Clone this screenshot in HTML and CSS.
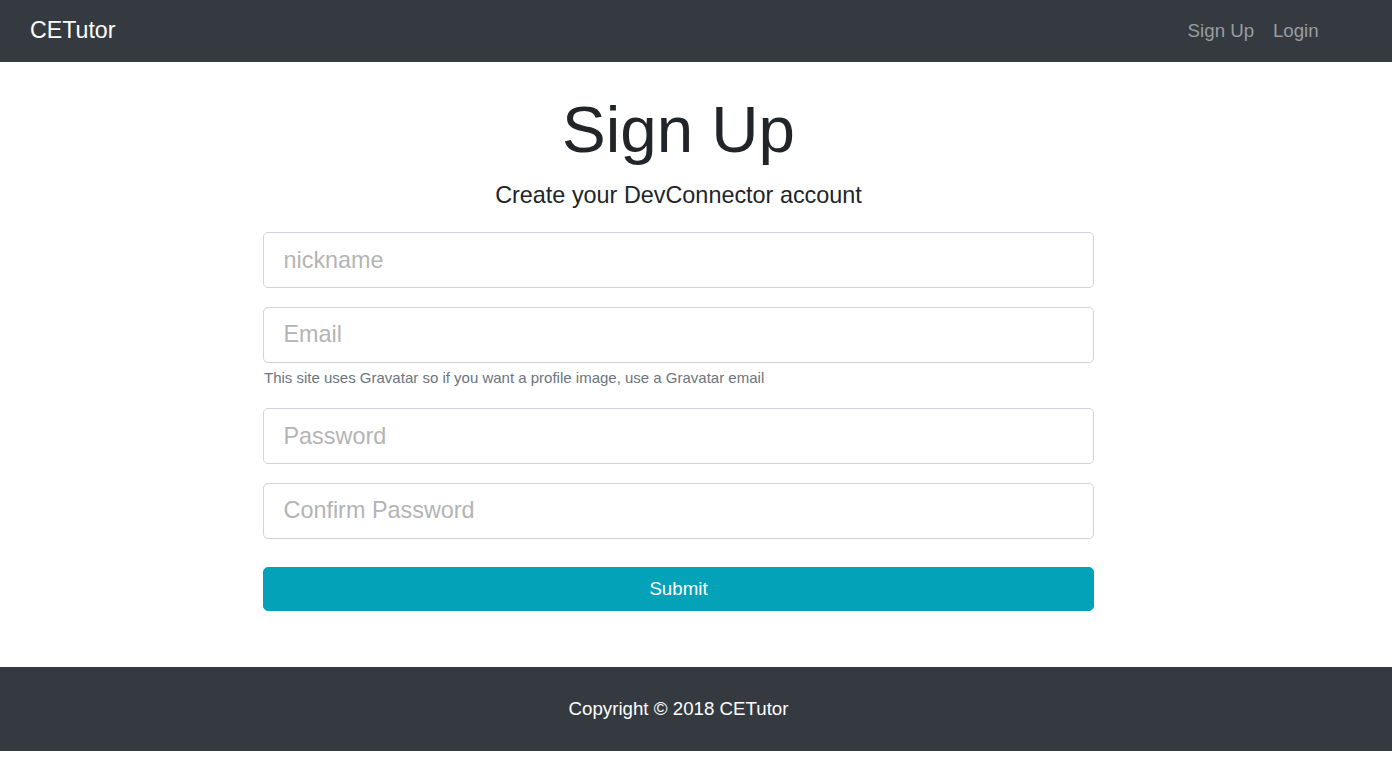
FILE: index.html
```html
<!DOCTYPE html>
<html lang="en">
<head>
<meta charset="utf-8">
<title>CETutor - Sign Up</title>
<link rel="stylesheet" href="styles.css">
</head>
<body>
<nav class="navbar">
  <a class="brand" href="#">CETutor</a>
  <ul class="nav">
    <li><a class="nav-link" href="#">Sign Up</a></li>
    <li><a class="nav-link" href="#">Login</a></li>
  </ul>
</nav>
<main class="main">
  <section class="register">
    <h1 class="title">Sign Up</h1>
    <p class="lead">Create your DevConnector account</p>
    <form class="form">
      <div class="form-group">
        <input class="form-control" type="text" placeholder="nickname">
      </div>
      <div class="form-group">
        <input class="form-control" type="email" placeholder="Email">
        <small class="form-text">This site uses Gravatar so if you want a profile image, use a Gravatar email</small>
      </div>
      <div class="form-group">
        <input class="form-control" type="password" placeholder="Password">
      </div>
      <div class="form-group">
        <input class="form-control" type="password" placeholder="Confirm Password">
      </div>
      <button class="btn-submit" type="button">Submit</button>
    </form>
  </section>
</main>
<footer class="footer">Copyright &copy; 2018 CETutor</footer>
</body>
</html>
```
FILE: styles.css
```css
* { box-sizing: border-box; }
html, body { margin: 0; padding: 0; }
body {
  font-family: "Liberation Sans", Arial, sans-serif;
  color: #212529;
  background: #fff;
}
.navbar {
  height: 62px;
  background: #343a40;
  display: flex;
  align-items: center;
  justify-content: space-between;
  padding: 0 64px 0 30px;
}
.brand {
  color: #fff;
  text-decoration: none;
  font-size: 23.2px;
  line-height: 1;
}
.nav {
  list-style: none;
  margin: 0;
  padding: 0;
  display: flex;
}
.nav-link {
  display: block;
  color: #9a9da0;
  text-decoration: none;
  font-size: 18.72px;
  padding: 0 9.36px;
}
.main {
  padding: 28.5px 35px 0 0;
}
.register {
  width: 831px;
  margin: 0 auto;
}
.title {
  margin: 0 0 9.36px;
  font-size: 65.5px;
  font-weight: 300;
  line-height: 1.2;
  text-align: center;
}
.lead {
  margin: 0 0 18.72px;
  font-size: 23.4px;
  font-weight: 400;
  line-height: 1.5;
  text-align: center;
}
.form { margin: 0; }
.form-group { margin-bottom: 18.72px; }
.form-control {
  display: block;
  width: 100%;
  height: 55.8px;
  padding: 0 19.5px;
  font-family: "Liberation Sans", Arial, sans-serif;
  font-size: 23.4px;
  color: #495057;
  background: #fff;
  border: 1px solid #ced4da;
  border-radius: 5px;
  outline: none;
}
.form-control::placeholder { color: #b4b4b4; opacity: 1; }
.form-text {
  display: block;
  margin-top: 4.68px;
  margin-left: 1px;
  font-size: 15px;
  line-height: 22.5px;
  color: #6c757d;
}
.btn-submit {
  display: block;
  width: 100%;
  height: 44.1px;
  margin-top: 28.08px;
  background: #03a2b9;
  border: 1px solid #03a2b9;
  border-radius: 5px;
  color: #fff;
  font-family: "Liberation Sans", Arial, sans-serif;
  font-size: 18.72px;
  cursor: pointer;
}
.form-group:last-of-type { margin-bottom: 0; }
.footer {
  margin-top: 56.2px;
  height: 83.5px;
  background: #343a40;
  color: #fff;
  font-size: 18.72px;
  display: flex;
  align-items: center;
  justify-content: center;
  padding-right: 35px;
}
```
